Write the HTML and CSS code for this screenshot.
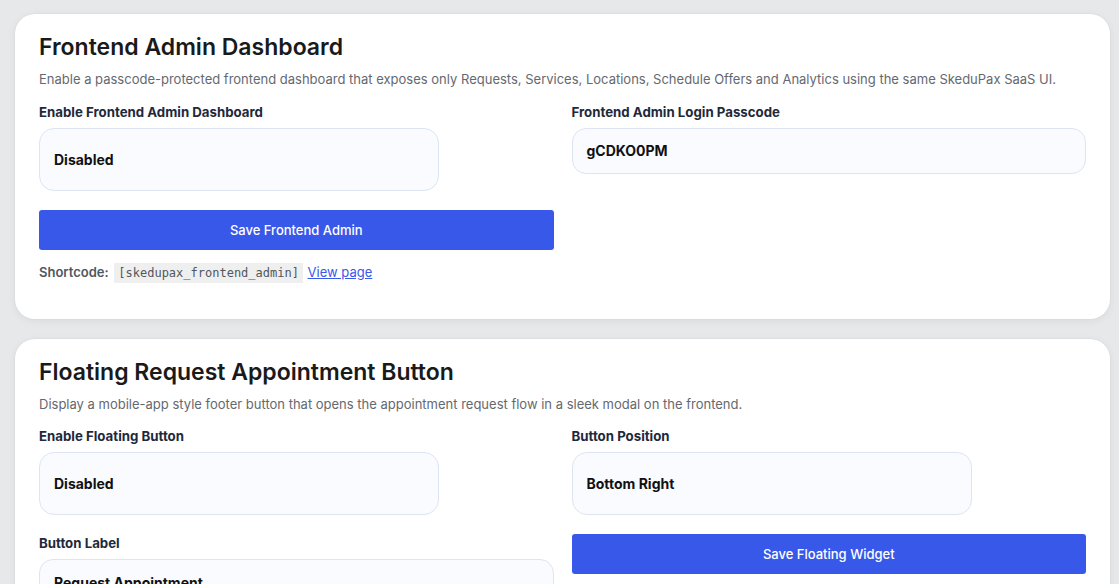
FILE: index.html
```html
<!DOCTYPE html>
<html lang="en">
<head>
<meta charset="utf-8">
<title>SkeduPax Settings</title>
<link rel="stylesheet" href="styles.css">
</head>
<body>
<main class="page">
  <section class="card">
    <h2 class="card-title">Frontend Admin Dashboard</h2>
    <p class="card-desc">Enable a passcode-protected frontend dashboard that exposes only Requests, Services, Locations, Schedule Offers and Analytics using the same SkeduPax SaaS UI.</p>
    <div class="grid">
      <div class="field">
        <label class="label">Enable Frontend Admin Dashboard</label>
        <div class="select">Disabled</div>
      </div>
      <div class="field">
        <label class="label">Frontend Admin Login Passcode</label>
        <div class="input">gCDKO0PM</div>
      </div>
      <div class="field">
        <button class="btn">Save Frontend Admin</button>
        <p class="shortcode"><span class="sc-label">Shortcode:</span> <code class="code">[skedupax_frontend_admin]</code> <a class="link" href="#">View page</a></p>
      </div>
    </div>
  </section>

  <section class="card">
    <h2 class="card-title">Floating Request Appointment Button</h2>
    <p class="card-desc">Display a mobile-app style footer button that opens the appointment request flow in a sleek modal on the frontend.</p>
    <div class="grid">
      <div class="field">
        <label class="label">Enable Floating Button</label>
        <div class="select">Disabled</div>
      </div>
      <div class="field">
        <label class="label">Button Position</label>
        <div class="select">Bottom Right</div>
      </div>
      <div class="field">
        <label class="label">Button Label</label>
        <div class="input">Request Appointment</div>
      </div>
      <div class="field">
        <button class="btn">Save Floating Widget</button>
      </div>
    </div>
  </section>
</main>
</body>
</html>
```

FILE: styles.css
```css
html {
  overflow: hidden;
}
body {
  margin: 0;
  background: #e7e8ea;
  font-family: Inter, "Noto Sans", "Liberation Sans", sans-serif;
  color: #1e1e1e;
}
.page {
  padding: 14px 9px 0 15px;
  display: flex;
  flex-direction: column;
  gap: 20px;
}
.card {
  background: #ffffff;
  border-radius: 20px;
  padding: 20px 24px 36px;
  box-shadow: 0 2px 10px rgba(0, 0, 0, 0.06), 0 0 0 1px rgba(0, 0, 0, 0.02);
}
.card-title {
  margin: 0 0 10px;
  font-size: 23px;
  line-height: 26px;
  font-weight: 600;
  color: #1a1a1a;
}
.card-desc {
  margin: 0 0 13px;
  font-size: 13px;
  line-height: 19.5px;
  color: #646970;
}
.grid {
  display: grid;
  grid-template-columns: 1fr 1fr;
  column-gap: 18px;
  row-gap: 19px;
  align-items: start;
}
.field {
  display: flex;
  flex-direction: column;
  align-items: flex-start;
}
.label {
  font-size: 13.25px;
  line-height: 18px;
  font-weight: 700;
  color: #1e293b;
  margin-bottom: 7px;
}
.select {
  box-sizing: border-box;
  width: 400px;
  height: 63px;
  display: flex;
  align-items: center;
  padding: 0 14px;
  border: 1px solid #dde4f2;
  border-radius: 15px;
  background: #f9fbff;
  font-size: 14px;
  font-weight: 700;
  color: #111111;
}
.input {
  box-sizing: border-box;
  width: 100%;
  height: 46px;
  display: flex;
  align-items: center;
  padding: 0 14px;
  border: 1px solid #dde4f2;
  border-radius: 14px;
  background: #f9fbff;
  font-size: 14px;
  font-weight: 700;
  color: #111111;
}
.btn {
  width: 100%;
  height: 40px;
  border: 0;
  border-radius: 3px;
  background: #3858e9;
  color: #ffffff;
  font-family: inherit;
  font-size: 13px;
  font-weight: 500;
}
.shortcode {
  margin: 12px 0 0;
  font-size: 13px;
  line-height: 20px;
  color: #50575e;
}
.sc-label {
  font-weight: 600;
}
.code {
  display: inline-block;
  padding: 0 4px;
  margin: 0 1px 0 2px;
  line-height: 20px;
  background: #efefef;
  font-family: "DejaVu Sans Mono", "Liberation Mono", monospace;
  font-size: 12px;
  color: #50575e;
}
.link {
  color: #3858e9;
  text-decoration: underline;
}
```
